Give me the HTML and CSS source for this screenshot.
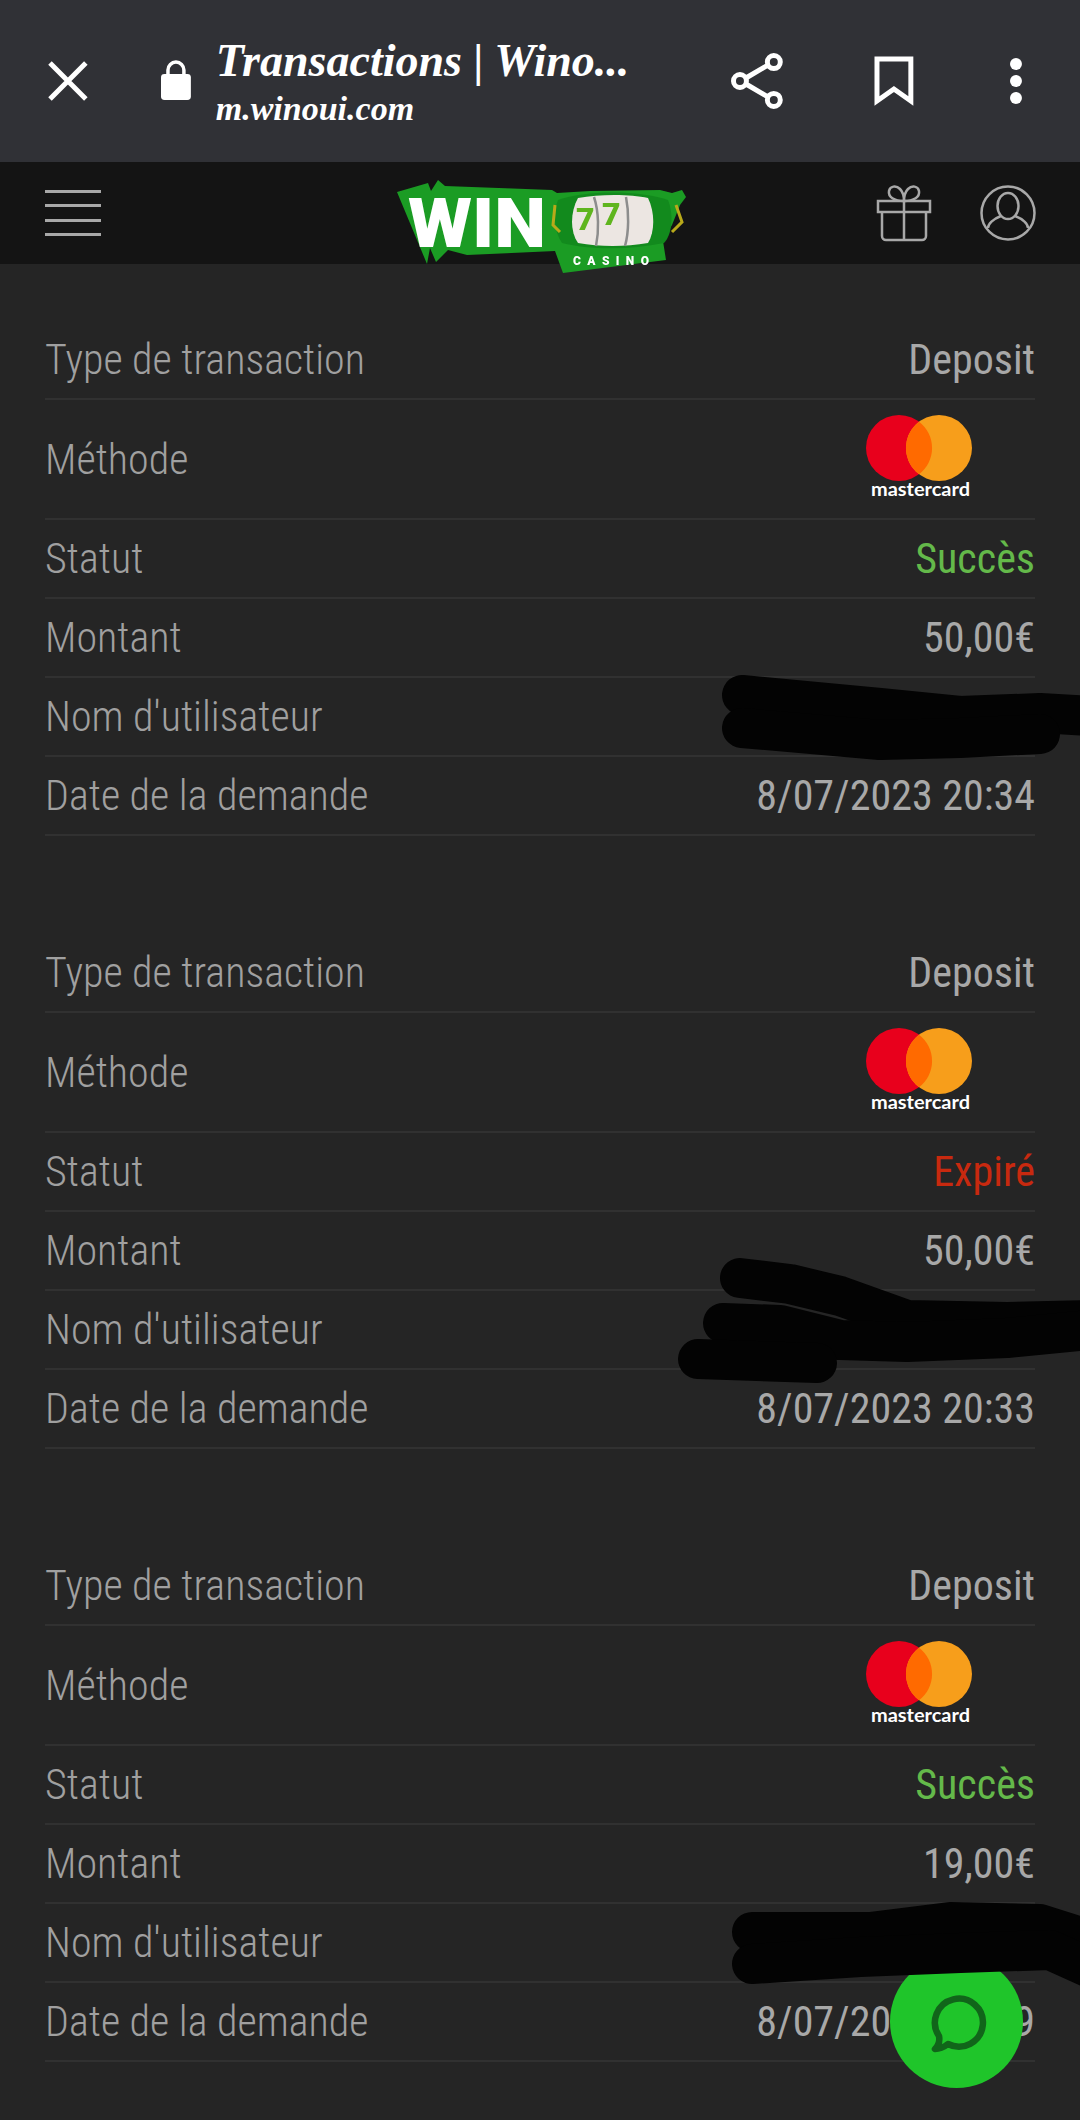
FILE: index.html
```html
<!DOCTYPE html>
<html lang="fr">
<head>
<meta charset="utf-8">
<title>Transactions | Winoui</title>
<link rel="stylesheet" href="styles.css">
</head>
<body>

<div class="toolbar">
	<svg class="tool-close" width="40" height="40" viewBox="0 0 40 40"><path d="M2 2 38 38M38 2 2 38" fill="none" stroke="#fff" stroke-width="5"/></svg>
	<svg class="tool-lock" width="30" height="40" viewBox="0 0 30 40"><path d="M7 15V10a8 8 0 0 1 16 0v5" fill="none" stroke="#fff" stroke-width="3.5"/><rect y="14" width="30" height="26" rx="3.5" fill="#fff"/></svg>
	<div class="tool-text">
		<div class="tool-title">Transactions | Wino...</div>
		<div class="tool-url">m.winoui.com</div>
	</div>
	<svg class="tool-share" width="52" height="56" viewBox="0 0 52 56"><g fill="none" stroke="#fff" stroke-width="5"><circle cx="43" cy="9" r="6.5"/><circle cx="9" cy="28" r="6.5"/><circle cx="43" cy="47" r="6.5"/><path d="M15 25 37 12M15 31 37 44"/></g></svg>
	<svg class="tool-mark" width="40" height="50" viewBox="0 0 40 50"><path d="M3 3H37V45L20 33 3 45Z" fill="none" stroke="#fff" stroke-width="5"/></svg>
	<svg class="tool-dots" width="14" height="46" viewBox="0 0 14 46"><circle cx="7" cy="6" r="6" fill="#fff"/><circle cx="7" cy="23" r="6" fill="#fff"/><circle cx="7" cy="40" r="6" fill="#fff"/></svg>
</div>

<div class="header">
	<div class="burger"><span></span><span></span><span></span><span></span></div>
	<svg class="logo" width="292" height="96" viewBox="394 179 292 96">
		<path d="M397 192 428 183 431 191 438 180 445 186 552 190 557 193 590 191 660 190 672 193 682 190 686 197 680 205 672 225 663 241 666 260 563 273 555 251 467 255 448 250 436 262 430 248 427 264Z" fill="#1b9c24"/>
		<path d="M558 200C585 190 640 190 668 200 674 215 672 235 664 243 630 250 590 250 562 243 554 232 553 212 558 200Z" fill="#128a1d"/>
		<path d="M555 205 553 225 560 232M676 205 682 222 672 232" fill="none" stroke="#b9a91a" stroke-width="3"/>
		<path d="M578 198C600 194 630 194 648 198 655 212 655 232 648 243 625 247 600 247 578 243 570 232 570 212 578 198Z" fill="#ece6e2"/>
		<path d="M594 197C599 212 599 232 596 246M626 197C629 212 629 232 625 246" fill="none" stroke="#8d8d8d" stroke-width="2.5"/>
		<text class="logo-win" x="408" y="247" textLength="138" lengthAdjust="spacingAndGlyphs">WIN</text>
		<text class="logo-seven" x="576" y="230">7</text>
		<text class="logo-seven" x="602" y="225">7</text>
		<text class="logo-casino" x="573" y="265" textLength="76" lengthAdjust="spacing">CASINO</text>
	</svg>
	<div class="header-icons">
		<svg width="56" height="58" viewBox="0 0 56 58"><g fill="none" stroke="#a8a8a8" stroke-width="2.5"><rect x="2" y="17" width="52" height="11"/><path d="M6 28V52a4 4 0 0 0 4 4H46a4 4 0 0 0 4-4V28M28 17V56"/><path d="M28 17C18 17 12 13 13 7 14 2 20 1 24 5 27 8 28 13 28 17 28 13 29 8 32 5 36 1 42 2 43 7 44 13 38 17 28 17Z"/></g></svg>
		<svg width="56" height="56" viewBox="0 0 56 56"><g fill="none" stroke="#a8a8a8" stroke-width="2.5"><circle cx="28" cy="28" r="26.5"/><ellipse cx="28" cy="21" rx="10.5" ry="13"/><path d="M21 31C13 34 8 39 8 43M35 31C43 34 48 39 48 43"/></g></svg>
	</div>
</div>

<div class="content">

	<div class="table">
		<div class="row"><span class="label">Type de transaction</span><span class="value">Deposit</span></div>
		<div class="row row-method">
			<span class="label">Méthode</span>
			<svg class="mc" width="170" height="84" viewBox="0 0 170 84"><circle cx="33" cy="33" r="33" fill="#e8001c"/><circle cx="73" cy="33" r="33" fill="#f79e1b"/><path d="M53 6.7a33 33 0 0 1 0 52.6 33 33 0 0 1 0-52.6Z" fill="#ff6a00"/><text x="5" y="81" textLength="99" lengthAdjust="spacingAndGlyphs">mastercard</text></svg>
		</div>
		<div class="row"><span class="label">Statut</span><span class="value success">Succès</span></div>
		<div class="row"><span class="label">Montant</span><span class="value">50,00€</span></div>
		<div class="row"><span class="label">Nom d'utilisateur</span></div>
		<div class="row"><span class="label">Date de la demande</span><span class="value">8/07/2023 20:34</span></div>
	</div>

	<div class="table">
		<div class="row"><span class="label">Type de transaction</span><span class="value">Deposit</span></div>
		<div class="row row-method">
			<span class="label">Méthode</span>
			<svg class="mc" width="170" height="84" viewBox="0 0 170 84"><circle cx="33" cy="33" r="33" fill="#e8001c"/><circle cx="73" cy="33" r="33" fill="#f79e1b"/><path d="M53 6.7a33 33 0 0 1 0 52.6 33 33 0 0 1 0-52.6Z" fill="#ff6a00"/><text x="5" y="81" textLength="99" lengthAdjust="spacingAndGlyphs">mastercard</text></svg>
		</div>
		<div class="row"><span class="label">Statut</span><span class="value expired">Expiré</span></div>
		<div class="row"><span class="label">Montant</span><span class="value">50,00€</span></div>
		<div class="row"><span class="label">Nom d'utilisateur</span></div>
		<div class="row"><span class="label">Date de la demande</span><span class="value">8/07/2023 20:33</span></div>
	</div>

	<div class="table">
		<div class="row"><span class="label">Type de transaction</span><span class="value">Deposit</span></div>
		<div class="row row-method">
			<span class="label">Méthode</span>
			<svg class="mc" width="170" height="84" viewBox="0 0 170 84"><circle cx="33" cy="33" r="33" fill="#e8001c"/><circle cx="73" cy="33" r="33" fill="#f79e1b"/><path d="M53 6.7a33 33 0 0 1 0 52.6 33 33 0 0 1 0-52.6Z" fill="#ff6a00"/><text x="5" y="81" textLength="99" lengthAdjust="spacingAndGlyphs">mastercard</text></svg>
		</div>
		<div class="row"><span class="label">Statut</span><span class="value success">Succès</span></div>
		<div class="row"><span class="label">Montant</span><span class="value">19,00€</span></div>
		<div class="row"><span class="label">Nom d'utilisateur</span></div>
		<div class="row"><span class="label">Date de la demande</span><span class="value">8/07/2023 20:29</span></div>
	</div>

</div>

<div class="chat">
	<svg width="66" height="66" viewBox="0 0 66 66"><path d="M11 60 C15 60 20 58 24 55 A24 24 0 1 0 15 47 C16 52 15 56 11 60Z" fill="none" stroke="#11651a" stroke-width="6.5" stroke-linejoin="round"/></svg>
</div>

<!-- scribbles over the user names -->
<svg class="scribbles" width="1080" height="2120" viewBox="0 0 1080 2120">
	<g fill="none" stroke="#030303" stroke-width="40" stroke-linecap="round" stroke-linejoin="round">
		<path d="M742 695 880 708 960 716 1040 713 1090 716"/>
		<path d="M742 728 880 740 960 738 1040 734"/>
		<path d="M740 1278 790 1284 840 1296 907 1320 1007 1322 1090 1320"/>
		<path d="M723 1323 780 1325 840 1340 907 1342 1007 1338 1090 1330"/>
		<path d="M698 1359 817 1363"/>
		<path d="M752 1932 870 1932 950 1922 1040 1924 1090 1940"/>
		<path d="M752 1964 860 1957 960 1953 1050 1950 1090 1968"/>
	</g>
</svg>

</body>
</html>
```

FILE: styles.css
```css
html, body {
	margin: 0;
	padding: 0;
}

body {
	position: relative;
	width: 1080px;
	height: 2120px;
	overflow: hidden;
	background: #252525;
	font-family: Roboto, sans-serif;
}

.toolbar {
	display: flex;
	align-items: center;
	height: 162px;
	padding: 0 57px 0 48px;
	box-sizing: border-box;
	background: #303136;
}

.tool-close { margin-right: 73px; }
.tool-lock { margin-right: 25px; margin-top: -2px; }

.tool-text {
	width: 518px;
	color: #fff;
	font-family: "Liberation Serif", serif;
	font-style: italic;
	font-weight: bold;
}

.tool-title {
	font-size: 46px;
	line-height: 56px;
	white-space: nowrap;
}

.tool-url {
	font-size: 34px;
	line-height: 40px;
}

.tool-share { margin-right: 91px; }
.tool-mark { margin-right: 95px; }

.header {
	display: flex;
	justify-content: space-between;
	align-items: center;
	height: 102px;
	padding: 0 44px 0 45px;
	box-sizing: border-box;
	background: #141414;
}

.burger {
	display: flex;
	flex-direction: column;
	gap: 11.5px;
	width: 56px;
}

.burger span {
	height: 3px;
	background: #a8a8a8;
}

.logo {
	position: absolute;
	top: 179px;
	left: 394px;
	filter: blur(0.5px);
}

.logo-win {
	font-family: Roboto, sans-serif;
	font-weight: 900;
	font-size: 68px;
	fill: #fff;
}

.logo-seven {
	font-family: Roboto, sans-serif;
	font-weight: 900;
	font-size: 32px;
	fill: #5fb51e;
}

.logo-casino {
	font-family: Roboto, sans-serif;
	font-weight: 900;
	font-size: 12px;
	fill: #fff;
}

.header-icons {
	display: flex;
	align-items: center;
	gap: 48px;
}

.content {
	padding: 57px 45px 0;
}

.table {
	margin-bottom: 98px;
}

.row {
	display: flex;
	justify-content: space-between;
	align-items: center;
	height: 79px;
	box-sizing: border-box;
	border-bottom: 2px solid #313131;
}

.row-method {
	height: 120px;
}

.label, .value {
	font-size: 42px;
	font-stretch: 75%;
	white-space: nowrap;
}

.label {
	font-weight: 300;
	color: #a0a0a0;
}

.value {
	color: #a8a8a8;
}

.success { color: #64b94a; }
.expired { color: #c8290f; }

.mc {
	margin-right: -1px;
	margin-top: -4px;
}

.mc text {
	font-family: Lato, sans-serif;
	font-size: 19px;
	font-weight: 700;
	fill: #fff;
}

.chat {
	position: absolute;
	left: 890px;
	top: 1955px;
	display: flex;
	align-items: center;
	justify-content: center;
	width: 133px;
	height: 133px;
	border-radius: 50%;
	background: #1fc52a;
}

.scribbles {
	position: absolute;
	left: 0;
	top: 0;
	pointer-events: none;
}
```
